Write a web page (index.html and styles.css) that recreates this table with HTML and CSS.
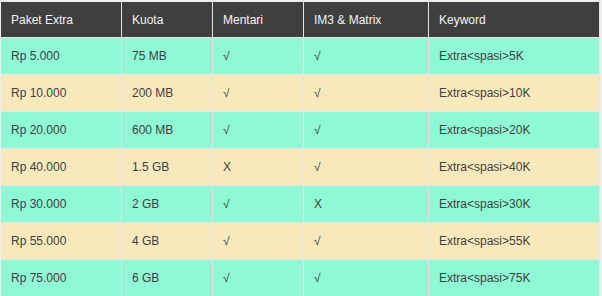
FILE: index.html
```html
<!DOCTYPE html>
<html>
<head>
<meta charset="utf-8">
<link rel="stylesheet" href="styles.css">
</head>
<body>
<table class="paket">
  <thead>
    <tr>
      <th class="c1">Paket Extra</th>
      <th class="c2">Kuota</th>
      <th class="c3">Mentari</th>
      <th class="c4">IM3 &amp; Matrix</th>
      <th class="c5">Keyword</th>
    </tr>
  </thead>
  <tbody>
    <tr class="odd"><td>Rp 5.000</td><td>75 MB</td><td>√</td><td>√</td><td>Extra&lt;spasi&gt;5K</td></tr>
    <tr class="even"><td>Rp 10.000</td><td>200 MB</td><td>√</td><td>√</td><td>Extra&lt;spasi&gt;10K</td></tr>
    <tr class="odd"><td>Rp 20.000</td><td>600 MB</td><td>√</td><td>√</td><td>Extra&lt;spasi&gt;20K</td></tr>
    <tr class="even"><td>Rp 40.000</td><td>1.5 GB</td><td>X</td><td>√</td><td>Extra&lt;spasi&gt;40K</td></tr>
    <tr class="odd"><td>Rp 30.000</td><td>2 GB</td><td>√</td><td>X</td><td>Extra&lt;spasi&gt;30K</td></tr>
    <tr class="even"><td>Rp 55.000</td><td>4 GB</td><td>√</td><td>√</td><td>Extra&lt;spasi&gt;55K</td></tr>
    <tr class="odd"><td>Rp 75.000</td><td>6 GB</td><td>√</td><td>√</td><td>Extra&lt;spasi&gt;75K</td></tr>
  </tbody>
</table>
</body>
</html>
```

FILE: styles.css
```css
html, body {
  margin: 0;
  padding: 0;
  background: #eeeeee;
}

body {
  font-family: "Liberation Sans", Arial, sans-serif;
  font-size: 12px;
}

.paket {
  border-collapse: separate;
  border-spacing: 0;
  table-layout: fixed;
  width: 599px;
  margin: 2px 0 0 1px;
}

.paket th,
.paket td {
  box-sizing: border-box;
  border-right: 1px solid #e4e4e4;
  border-bottom: 1px solid #e4e4e4;
  padding: 0 0 0 10px;
  text-align: left;
  vertical-align: middle;
  white-space: nowrap;
}

.paket th {
  height: 36px;
  background: #3f3f3f;
  color: #f4f4f4;
  font-weight: normal;
}

.paket td {
  height: 37px;
  color: #3f3f3f;
}

.c1 { width: 121px; }
.c2 { width: 91px; }
.c3 { width: 91px; }
.c4 { width: 125px; }
.c5 { width: 171px; }

.odd td { background: #8ff8d5; }
.even td { background: #f8e9bd; }
```
